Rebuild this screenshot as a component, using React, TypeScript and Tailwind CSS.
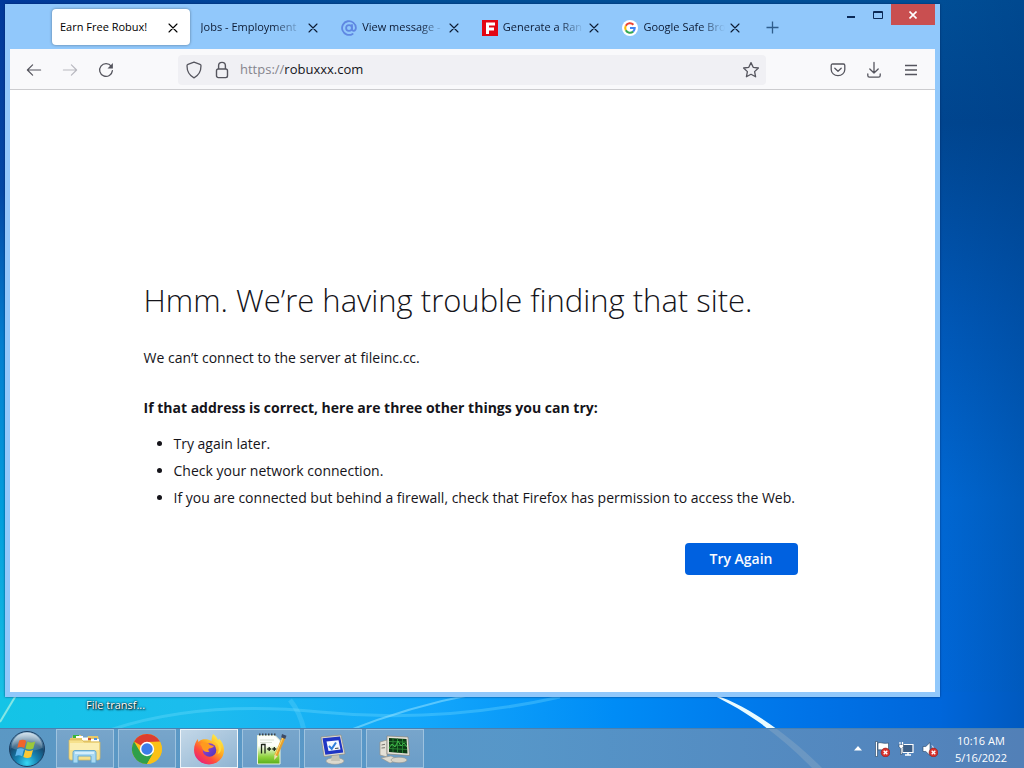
import React from 'react'
import clsx from 'clsx'

type IconProps = { className?: string }

function CloseIcon() {
  return (
    <svg width="10" height="10" viewBox="0 0 10 10" fill="none" stroke="currentColor" strokeWidth="1.1" strokeLinecap="round">
      <path d="M1 1l8 8M9 1L1 9" />
    </svg>
  )
}

function BackIcon({ className }: IconProps) {
  return (
    <svg className={className} width="16" height="16" viewBox="0 0 16 16" fill="none" stroke="currentColor" strokeWidth="1.2" strokeLinecap="round" strokeLinejoin="round">
      <path d="M14.6 8H1.4M6.6 2.8L1.4 8L6.6 13.2" />
    </svg>
  )
}

function ReloadIcon() {
  return (
    <svg width="16" height="16" viewBox="0 0 16 16" fill="none" stroke="currentColor" strokeWidth="1.3" strokeLinecap="round">
      <path d="M13.2 4.2A6.4 6.4 0 1 0 14.4 8.6" />
      <path d="M14.9 1v5.4H9.5z" fill="currentColor" stroke="none" />
    </svg>
  )
}

function ShieldIcon() {
  return (
    <svg width="16" height="18" viewBox="0 0 16 18" fill="none" stroke="currentColor" strokeWidth="1.3" strokeLinejoin="round">
      <path d="M8 1.2L14 3.3C14.8 3.6 15 4 15 4.8C15 10.6 12.9 14.4 8 16.8C3.1 14.4 1 10.6 1 4.8C1 4 1.2 3.6 2 3.3Z" />
    </svg>
  )
}

function LockIcon() {
  return (
    <svg width="14" height="18" viewBox="0 0 14 18" fill="none" stroke="currentColor" strokeWidth="1.4">
      <rect x="1.5" y="8" width="11" height="8.6" rx="1.8" />
      <path d="M3.6 8V4.800a3.4 3.4 0 0 1 6.800 0V8" />
    </svg>
  )
}

function StarIcon() {
  return (
    <svg width="18" height="18" viewBox="0 0 18 18" fill="none" stroke="currentColor" strokeWidth="1.3" strokeLinejoin="round">
      <path d="M9 1.6L11.2 6.3L16.4 7L12.6 10.6L13.6 15.8L9 13.3L4.4 15.8L5.4 10.6L1.6 7L6.8 6.3Z" />
    </svg>
  )
}

function PocketIcon() {
  return (
    <svg width="16" height="16" viewBox="0 0 16 16" fill="none" stroke="currentColor" strokeWidth="1.3" strokeLinecap="round" strokeLinejoin="round">
      <path d="M2.600 2h10.800a1.4 1.4 0 0 1 1.4 1.4v4a6.8 6.3 0 0 1-13.600 0v-4A1.4 1.4 0 0 1 2.600 2z" />
      <path d="M4.800 6.200L8 9.200l3.200-3" />
    </svg>
  )
}

function DownloadIcon() {
  return (
    <svg width="16" height="18" viewBox="0 0 16 18" fill="none" stroke="currentColor" strokeWidth="1.3" strokeLinecap="round" strokeLinejoin="round">
      <path d="M8 1.500V12M3.800 8L8 12l4.200-4M1.800 13v1.600a1.6 1.6 0 0 0 1.6 1.6h9.200a1.6 1.6 0 0 0 1.6-1.6V13" />
    </svg>
  )
}

function MenuIcon() {
  return (
    <svg width="14" height="14" viewBox="0 0 14 14" stroke="currentColor" strokeWidth="1.3">
      <path d="M1 2.500h12M1 7h12M1 11.500h12" />
    </svg>
  )
}

function AtIcon() {
  return (
    <svg width="16" height="16" viewBox="0 0 16 16" fill="none" stroke="#5f87e2" strokeWidth="1.8" strokeLinecap="round">
      <circle cx="8" cy="8" r="2.900" />
      <path d="M11 5v4.200c0 2.400 3.900 2.200 3.900-1.400A6.9 6.9 0 1 0 11.600 13.900" />
    </svg>
  )
}

function RedFIcon() {
  return (
    <svg width="16" height="16" viewBox="0 0 16 16">
      <rect width="16" height="16" fill="#e30613" />
      <path d="M4 2.500h9v3H7v2h5v3H7v3.500H4z" fill="#fff" />
    </svg>
  )
}

function GoogleIcon() {
  return (
    <svg width="16" height="16" viewBox="0 0 16 16" fill="none" strokeWidth="2.1">
      <circle cx="8" cy="8" r="8" fill="#fff" />
      <path d="M11.4 4.700A4.8 4.8 0 0 0 3.800 5.700" stroke="#ea4335" />
      <path d="M3.800 5.700a4.8 4.8 0 0 0 0 4.600" stroke="#fbbc05" />
      <path d="M3.800 10.300a4.8 4.8 0 0 0 7.300 1.300" stroke="#34a853" />
      <path d="M11.100 11.600A4.7 4.7 0 0 0 12.700 8H8" stroke="#4285f4" />
    </svg>
  )
}

function StartOrb() {
  return (
    <svg width="38" height="38" viewBox="0 0 38 38">
      <defs>
        <radialGradient id="orb" cx="50%" cy="90%" r="85%">
          <stop offset="0" stopColor="#38d8f4" />
          <stop offset="0.35" stopColor="#1684b4" />
          <stop offset="0.7" stopColor="#174a70" />
          <stop offset="1" stopColor="#7ca6c4" />
        </radialGradient>
        <linearGradient id="orbShine" x1="0" y1="0" x2="0" y2="1">
          <stop offset="0" stopColor="#fff" stopOpacity="0.65" />
          <stop offset="1" stopColor="#fff" stopOpacity="0.1" />
        </linearGradient>
      </defs>
      <circle cx="19" cy="19" r="17.500" fill="url(#orb)" stroke="#1c3f63" />
      <path d="M3.500 18a15.5 15.5 0 0 1 31 0c-8 4-23 4-31 0z" fill="url(#orbShine)" />
      <path d="M11.200 10.600c2.600-1.400 5-1.100 7 .1l-1.900 7.200c-2.400-1.300-4.700-1.200-7-.1z" fill="#f0642b" />
      <path d="M19.400 11.500c2.500 1.200 5 1.200 7.800 0l-1.900 7.100c-2.600 1.200-5.200 1.100-7.800-.1z" fill="#9bc83b" />
      <path d="M9 19.200c2.300-1.200 4.700-1.200 7 0l-1.900 7c-2.400-1.200-4.600-1.200-6.900 0z" fill="#5fb5ec" />
      <path d="M17.200 19.900c2.500 1.300 5 1.300 7.800.1l-1.900 7.100c-2.700 1.200-5.300 1.100-7.800-.1z" fill="#fcc834" />
    </svg>
  )
}

function ExplorerIcon() {
  return (
    <svg width="34" height="32" viewBox="0 0 34 32">
      <path d="M2 5h2l1-3h8l1 3h5l1-2h10l1 4v18H2z" fill="#e6c869" />
      <path d="M5 2h6v3H5z" fill="#35b53b" />
      <path d="M8 3h7v2H8z" fill="#fff" />
      <path d="M14 4.500h6v3h-6z" fill="#fff" />
      <path d="M20 5h3v2h-3z" fill="#d8532f" />
      <path d="M23 6h8v2.500h-8z" fill="#fff" />
      <path d="M26 5h3v2h-3z" fill="#4c8edd" />
      <path d="M1 7h13l2 2h16v16a2 2 0 0 1-2 2H3a2 2 0 0 1-2-2z" fill="#f6e18c" stroke="#d8b95b" strokeWidth="0.7" />
      <path d="M2 10h29v7H2z" fill="#fdf4c0" opacity="0.7" />
      <path d="M5 30V19.500a2 2 0 0 1 2-2h19a2 2 0 0 1 2 2V30h-5v-7H10v7z" fill="#a9d9f2" stroke="#5fa5cf" strokeWidth="0.9" />
      <path d="M7 20h19" stroke="#e4f6ff" strokeWidth="1.5" />
    </svg>
  )
}

function ChromeIcon() {
  return (
    <svg width="32" height="32" viewBox="0 0 32 32">
      <circle cx="16" cy="16" r="15" fill="#fbc116" />
      <path d="M16 16L3 8.500A15 15 0 0 1 29 8.500L16 9z" fill="#dc3d30" />
      <path d="M3 8.500A15 15 0 0 0 16 31L22.500 19.800L16 16L9.500 19.500z" fill="#2f9f4b" />
      <path d="M16 9h13a15 15 0 0 1-13 22l6.500-11.200z" fill="#fbc116" />
      <circle cx="16" cy="16" r="7.200" fill="#fff" />
      <circle cx="16" cy="16" r="5.700" fill="#3b7de8" />
    </svg>
  )
}

function FirefoxIcon() {
  return (
    <svg width="32" height="32" viewBox="0 0 32 32">
      <defs>
        <linearGradient id="fox" x1="0.85" y1="0.1" x2="0.2" y2="0.95">
          <stop offset="0" stopColor="#fff04a" />
          <stop offset="0.4" stopColor="#ffa51e" />
          <stop offset="0.7" stopColor="#ff4c3d" />
          <stop offset="1" stopColor="#e9207c" />
        </linearGradient>
        <linearGradient id="foxGlobe" x1="0" y1="0" x2="1" y2="1">
          <stop offset="0" stopColor="#a045dd" />
          <stop offset="1" stopColor="#4b36b5" />
        </linearGradient>
      </defs>
      <path d="M20 1c3 2 4 4 5 6c1-.4 1-1 1-1.500c3 3 5 7 5 11.500a15 14.500 0 0 1-30 0C1 12 3 8 5 6c0 1 0 2 .5 3c1-1 2-2 4-2.500c3-.7 7 0 9 1.500c0-2 .5-5 1.500-7z" fill="url(#fox)" />
      <circle cx="16.500" cy="17" r="6.800" fill="url(#foxGlobe)" />
      <path d="M7 11c3-2 7-2 10 1l4 1c-1 2-3 2-5 2.500c-1 1-1 2 .5 3c-3 1.500-6 0-7-2.500c-.5-2-1-3-2.500-5z" fill="#ff9a1f" />
      <path d="M21 8c5 3 6 8 3.500 13c3-1 4-4 4-7c0-3-3-6-7.500-6z" fill="#ffd93a" />
    </svg>
  )
}

function NotepadIcon() {
  return (
    <svg width="32" height="34" viewBox="0 0 32 34">
      <defs>
        <linearGradient id="npp" x1="0" y1="0" x2="0" y2="1">
          <stop offset="0.35" stopColor="#fdfffa" />
          <stop offset="0.75" stopColor="#8fd23c" />
          <stop offset="1" stopColor="#57ad1b" />
        </linearGradient>
      </defs>
      <path d="M2.500 3.500H20l5 5V32H2.500z" fill="url(#npp)" stroke="#e8f3dc" />
      <path d="M4 2.500h17" stroke="#38434a" strokeWidth="2" strokeDasharray="1.500 1.500" />
      <path d="M5 8h14M5 10.500h12" stroke="#cfd9c9" strokeWidth="0.8" />
      <path d="M6.500 21.500V12M6.500 12.500h3.500V21.500M12.200 17h4M14.200 15v4M17.300 17h4M19.300 15v4" fill="none" stroke="#1c2618" strokeWidth="1.300" />
      <path d="M29 5L21 23.500" stroke="#e6a12e" strokeWidth="3.400" />
      <path d="M28.200 5L20.400 23" stroke="#ffd76c" strokeWidth="1" />
      <path d="M27 2l4.500 1.800l-1.300 3.200l-4-1.800z" fill="#3d4a66" />
      <path d="M19.400 22.800l3.200 1.400L19.200 28z" fill="#f4dcae" />
    </svg>
  )
}

function MonitorCheckIcon() {
  return (
    <svg width="32" height="32" viewBox="0 0 32 32">
      <ellipse cx="18" cy="28" rx="9" ry="3.300" fill="#dcd9cd" stroke="#9c998e" strokeWidth="0.6" />
      <path d="M15 22h7l1 6h-9z" fill="#c5c2b6" />
      <path d="M4 4L24 2l4 19L7 23.500z" fill="#e2dfd4" stroke="#8f8c83" strokeWidth="0.7" />
      <path d="M5.500 5.300L23 3.600l3.300 16L8.300 21.800z" fill="#1f35c4" />
      <path d="M9.500 8.500l12-1.200l2 9.200l-12 1.500z" fill="#f4f8ff" />
      <path d="M12 13l2.700 2.800l4.300-6.300" fill="none" stroke="#2f7edb" strokeWidth="2" />
      <path d="M18 15.500l3.500-.4" stroke="#555" strokeWidth="1.200" />
    </svg>
  )
}

function SystemMonitorIcon() {
  return (
    <svg width="34" height="32" viewBox="0 0 34 32">
      <path d="M2 9l7-2v17l-7-2z" fill="#e4e1d7" stroke="#96948b" strokeWidth="0.7" />
      <path d="M3.500 12l3.500-.7M3.500 15l3.500-.3" stroke="#77756e" />
      <path d="M3 25l10-2l8 4l-9 3z" fill="#dedbd0" stroke="#96948b" strokeWidth="0.6" />
      <ellipse cx="21" cy="27" rx="8" ry="2.800" fill="#d6d3c8" stroke="#96948b" strokeWidth="0.6" />
      <path d="M9 3l21 1l1.500 18.500L9 21z" fill="#e6e3d9" stroke="#85837b" strokeWidth="0.7" />
      <path d="M11 5l17.500 1l1 14.500L11 19z" fill="#0b3a14" />
      <path d="M11 8.500l18 .7M11 12l18 .8M11 15.500l18 1M15 5v14M19.500 5.500v14M24.500 6v14" stroke="#2b8a35" strokeWidth="0.9" />
      <path d="M11 15l3-4l3 3l3-6l3 5l3-3l3 4" fill="none" stroke="#3fb848" strokeWidth="1" />
    </svg>
  )
}

function RedBadge() {
  return (
    <>
      <circle cx="11.500" cy="11.500" r="4.400" fill="#d8322d" stroke="#8e1c18" strokeWidth="0.6" />
      <path d="M9.700 9.700l3.600 3.600M13.300 9.700l-3.600 3.600" stroke="#fff" strokeWidth="1.400" />
    </>
  )
}

function FlagIcon() {
  return (
    <svg width="16" height="16" viewBox="0 0 16 16">
      <path d="M1.500 0.500h2V15.500h-2z" fill="#fff" stroke="#23405f" strokeWidth="0.6" />
      <path d="M4 2c3-1.200 5 1.200 10.500 0v7C10 10.500 7 8 4 9z" fill="#fff" stroke="#23405f" strokeWidth="0.6" />
      <RedBadge />
    </svg>
  )
}

function NetworkIcon() {
  return (
    <svg width="16" height="16" viewBox="0 0 16 16">
      <path d="M4.500 3.500h10.500v8H4.500z" fill="#3c5f87" stroke="#fff" strokeWidth="1.200" />
      <path d="M7 14h6M10 12v2" stroke="#fff" strokeWidth="1.500" />
      <path d="M1 3.500h4.500v2.300L4 7.300v6.200H2.500V7.300L1 5.800z" fill="#fff" stroke="#23405f" strokeWidth="0.6" />
      <path d="M2 1v2.500M4.500 1v2.500" stroke="#fff" strokeWidth="1.200" />
    </svg>
  )
}

function SpeakerIcon() {
  return (
    <svg width="16" height="16" viewBox="0 0 16 16">
      <path d="M1 5.500h2.800L8 1.500v13L3.800 10.500H1z" fill="#fff" stroke="#23405f" strokeWidth="0.6" />
      <path d="M10 4.500a4 4 0 0 1 1.300 3" fill="none" stroke="#fff" />
      <RedBadge />
    </svg>
  )
}

const tabs = [
  { title: 'Earn Free Robux!', icon: null, active: true },
  { title: 'Jobs - Employment', icon: null, active: false },
  { title: 'View message -', icon: <AtIcon />, active: false },
  { title: 'Generate a Ran', icon: <RedFIcon />, active: false },
  { title: 'Google Safe Bro', icon: <GoogleIcon />, active: false }
]

const taskbarApps = [
  { name: 'Windows Explorer', icon: <ExplorerIcon />, active: false },
  { name: 'Google Chrome', icon: <ChromeIcon />, active: false },
  { name: 'Firefox', icon: <FirefoxIcon />, active: true },
  { name: 'Notepad++', icon: <NotepadIcon />, active: false },
  { name: 'Remote settings', icon: <MonitorCheckIcon />, active: false },
  { name: 'System monitor', icon: <SystemMonitorIcon />, active: false }
]

function Wallpaper() {
  return (
    <svg className="absolute inset-0 -z-10 h-full w-full" viewBox="0 0 1024 768" preserveAspectRatio="none">
      <defs>
        <linearGradient id="skyRight" x1="0" y1="0" x2="0" y2="1">
          <stop offset="0" stopColor="#004e96" />
          <stop offset="0.16" stopColor="#00458f" />
          <stop offset="0.4" stopColor="#0056b4" />
          <stop offset="0.65" stopColor="#0067d2" />
          <stop offset="1" stopColor="#0066da" />
        </linearGradient>
        <linearGradient id="skyLeft" x1="0" y1="0" x2="0" y2="1">
          <stop offset="0" stopColor="#00389a" />
          <stop offset="0.25" stopColor="#0048a4" />
          <stop offset="0.45" stopColor="#007fd0" />
          <stop offset="0.65" stopColor="#009cdc" />
          <stop offset="0.9" stopColor="#18c0e4" />
        </linearGradient>
        <linearGradient id="skyBottom" x1="0" y1="0" x2="1" y2="0">
          <stop offset="0" stopColor="#14c4e6" />
          <stop offset="0.2" stopColor="#1cbcee" />
          <stop offset="0.42" stopColor="#12a6fb" />
          <stop offset="0.6" stopColor="#008cf6" />
          <stop offset="0.78" stopColor="#0074e8" />
          <stop offset="0.92" stopColor="#0066da" />
        </linearGradient>
        <linearGradient id="topFade" x1="0" y1="0" x2="1" y2="0">
          <stop offset="0" stopColor="#00389a" />
          <stop offset="1" stopColor="#00389a" stopOpacity="0" />
        </linearGradient>
        <linearGradient id="edgeShade" x1="0" y1="0" x2="1" y2="0">
          <stop offset="0" stopColor="#003c80" stopOpacity="0" />
          <stop offset="1" stopColor="#003c80" stopOpacity="0.3" />
        </linearGradient>
      </defs>
      <rect width="1024" height="768" fill="url(#skyRight)" />
      <rect width="400" height="20" fill="url(#topFade)" />
      <rect width="20" height="768" fill="url(#skyLeft)" />
      <rect y="692" width="1024" height="76" fill="url(#skyBottom)" />
      <rect x="940" width="84" height="768" fill="url(#edgeShade)" />
      <path d="M0 722L18 692" stroke="#b4f5e4" strokeWidth="2" opacity="0.7" />
      <path d="M110 730Q200 700 320 712T560 697" fill="none" stroke="#7fe0ff" strokeWidth="3" opacity="0.3" />
      <path d="M345 732Q410 706 475 694" fill="none" stroke="#9fe8ff" strokeWidth="2" opacity="0.5" />
      <path d="M290 700Q300 712 304 730" fill="none" stroke="#8fe4ff" strokeWidth="5" opacity="0.2" />
      <path d="M710 694C740 700 790 735 822 768H812C785 740 750 712 710 694Z" fill="#e9fbff" />
    </svg>
  )
}

function TabStrip() {
  return (
    <div className="flex h-[45px] items-start pl-[42px]">
      <div role="tablist" className="mt-[5px] grid w-[703px] grid-cols-5">
        {tabs.map((tab) => (
          <div
            key={tab.title}
            className={clsx(
              'mr-[3px] flex h-9 min-w-0 items-center gap-[5px] rounded pt-px pr-3 pl-2 text-[11px] text-[#0c1a33]',
              tab.active && 'bg-white text-black shadow-[0_0_3px_rgba(0,0,0,0.4)]'
            )}
          >
            {tab.icon && <span className="shrink-0">{tab.icon}</span>}
            <button
              role="tab"
              aria-selected={tab.active}
              className={clsx(
                'min-w-0 flex-1 text-left whitespace-nowrap',
                !tab.active && '[mask-image:linear-gradient(to_right,black_70%,transparent)]'
              )}
            >
              {tab.title}
            </button>
            <button aria-label="Close tab" className="shrink-0">
              <CloseIcon />
            </button>
          </div>
        ))}
      </div>
      <button aria-label="New tab" className="mt-[17px] ml-[11px] text-[#2f5d8c]">
        <svg width="13" height="13" viewBox="0 0 13 13" stroke="currentColor" strokeWidth="1.3">
          <path d="M6.500 0.500v12M0.500 6.500h12" />
        </svg>
      </button>
      <div className="ml-auto flex items-start text-[#0b2a57]">
        <button aria-label="Minimize" className="flex h-[21px] w-7 items-center justify-center">
          <svg width="8" height="8" viewBox="0 0 8 8" fill="currentColor">
            <path d="M0 5h8v2H0z" />
          </svg>
        </button>
        <button aria-label="Maximize" className="flex h-[21px] w-[26px] items-center justify-center">
          <svg width="10" height="8" viewBox="0 0 10 8" fill="none" stroke="currentColor">
            <path d="M0.500 0.500h9v7h-9zM0.500 1.500h9" />
          </svg>
        </button>
        <button aria-label="Close" className="flex h-[21px] w-11 items-center justify-center bg-[#c94f50] text-white">
          <svg width="8" height="8" viewBox="0 0 8 8" stroke="currentColor" strokeWidth="1.6">
            <path d="M0.500 0.500l7 7M7.500 0.500l-7 7" />
          </svg>
        </button>
      </div>
    </div>
  )
}

function Toolbar() {
  return (
    <div className="flex h-[41px] items-center border-b border-[#cccccf] bg-[#f9f9fb] pt-[2px] pr-[17px] pl-4 text-[#55555e]">
      <div className="flex items-center gap-5">
        <button aria-label="Back">
          <BackIcon />
        </button>
        <button aria-label="Forward" disabled className="text-[#b9b9c0]">
          <BackIcon className="-scale-x-100" />
        </button>
        <button aria-label="Reload">
          <ReloadIcon />
        </button>
      </div>
      <div className="mr-16 ml-16 flex h-[30px] flex-1 items-center rounded bg-[#f0f0f4] pr-[6px] pl-2">
        <ShieldIcon />
        <span className="ml-[13px]">
          <LockIcon />
        </span>
        <label className="ml-[11px] flex h-full flex-1 items-center text-[13px]">
          <span className="text-[#85858d]">https://</span>
          <input
            type="text"
            aria-label="Address"
            defaultValue="robuxxx.com"
            className="min-w-0 flex-1 bg-transparent text-[#15141a] outline-none"
          />
        </label>
        <button aria-label="Bookmark this page">
          <StarIcon />
        </button>
      </div>
      <div className="flex items-center gap-5">
        <button aria-label="Save to Pocket">
          <PocketIcon />
        </button>
        <button aria-label="Downloads">
          <DownloadIcon />
        </button>
        <button aria-label="Open menu" className="ml-[2px]">
          <MenuIcon />
        </button>
      </div>
    </div>
  )
}

function ErrorPage() {
  return (
    <main className="flex flex-1 flex-col items-center justify-center bg-white pt-[73px] text-[14px] leading-5 text-[#15141a]">
      <div className="w-full max-w-[658px]">
        <h1 className="text-[31px] leading-10 font-light">Hmm. We’re having trouble finding that site.</h1>
        <p className="mt-7">We can’t connect to the server at fileinc.cc.</p>
        <p className="mt-[30px] font-bold">If that address is correct, here are three other things you can try:</p>
        <ul className="mt-3 list-disc pl-[30px] leading-[27px]">
          <li>Try again later.</li>
          <li>Check your network connection.</li>
          <li>If you are connected but behind a firewall, check that Firefox has permission to access the Web.</li>
        </ul>
        <div className="mt-8 flex justify-end pr-1">
          <button className="h-8 w-[113px] rounded bg-[#0061e0] font-semibold text-[#fbfbfe]">Try Again</button>
        </div>
      </div>
    </main>
  )
}

function Taskbar() {
  return (
    <footer className="flex h-10 items-center border-t border-[#4a80b0] bg-linear-to-r from-[#6393c0]/90 via-[#5f96c3]/90 to-[#5b84b6]/90">
      <button aria-label="Start" className="mr-[10px] ml-2">
        <StartOrb />
      </button>
      <nav className="flex h-full gap-1">
        {taskbarApps.map((app) => (
          <button
            key={app.name}
            aria-label={app.name}
            className={clsx(
              'flex h-full w-[58px] items-center justify-center border',
              app.active
                ? 'border-white/80 bg-linear-to-br from-[#c4d8e8] to-[#8fb4d2]'
                : 'border-[#a9cbe4]/80 bg-linear-to-b from-[#7fa9cc]/80 to-[#6f9fc8]/80'
            )}
          >
            {app.icon}
          </button>
        ))}
      </nav>
      <div className="ml-auto flex items-center pr-[17px] text-white">
        <button aria-label="Show hidden icons">
          <svg width="8" height="5" viewBox="0 0 8 5" fill="currentColor">
            <path d="M4 0l4 4.500H0z" />
          </svg>
        </button>
        <div className="ml-3 flex items-center gap-2">
          <FlagIcon />
          <NetworkIcon />
          <SpeakerIcon />
        </div>
        <div className="ml-[17px] text-center text-[11px] leading-[17px]">
          <div>10:16 AM</div>
          <div>5/16/2022</div>
        </div>
      </div>
    </footer>
  )
}

export default function App() {
  return (
    <div className="relative isolate flex min-h-screen flex-col overflow-hidden font-['Open_Sans','Noto_Sans',sans-serif]">
      <Wallpaper />
      <div className="flex flex-1 flex-col pt-1 pr-[84px] pl-[5px]">
        <div className="flex flex-1 flex-col bg-[#91c8fb] px-[5px] pb-[5px] shadow-[0_0_2px_rgba(0,30,80,0.7)]">
          <TabStrip />
          <Toolbar />
          <ErrorPage />
        </div>
        <div className="h-[31px] pl-[81px] text-[11px] leading-4 text-white [text-shadow:1px_1px_2px_black,0_0_2px_black]">
          File transf...
        </div>
      </div>
      <Taskbar />
    </div>
  )
}
